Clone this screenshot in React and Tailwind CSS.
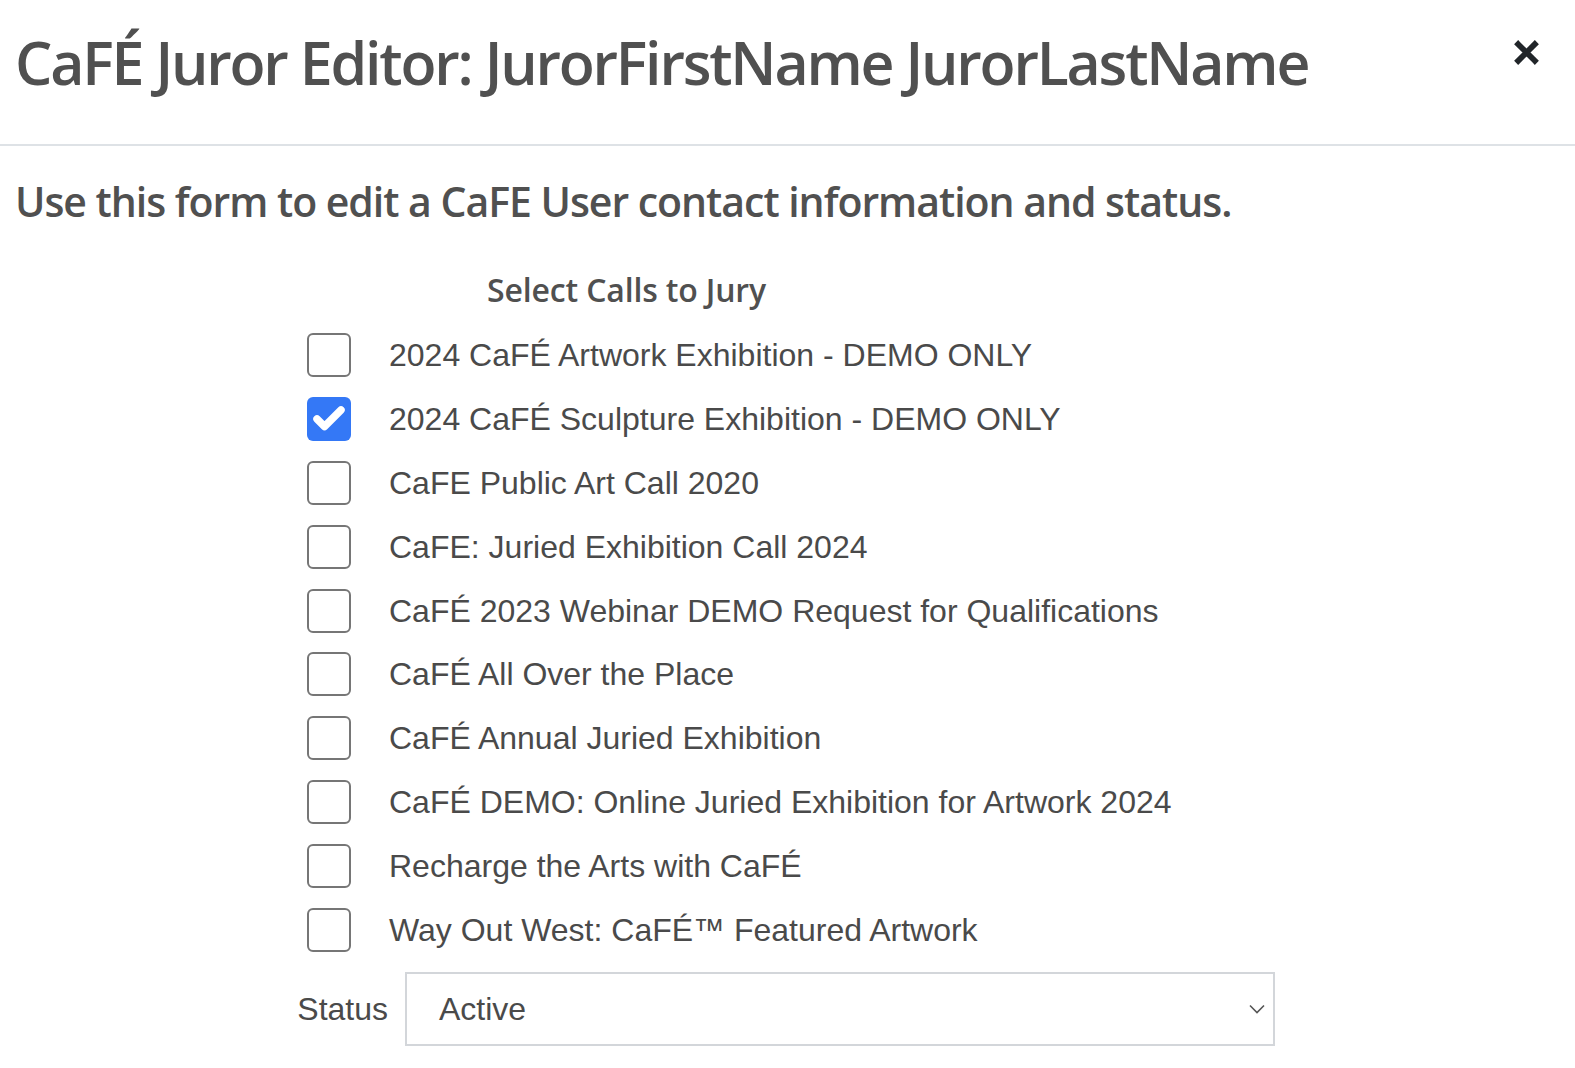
import { Check } from 'lucide-react';

const calls = [
  { id: 1, name: '2024 CaFÉ Artwork Exhibition - DEMO ONLY', checked: false },
  { id: 2, name: '2024 CaFÉ Sculpture Exhibition - DEMO ONLY', checked: true },
  { id: 3, name: 'CaFE Public Art Call 2020', checked: false },
  { id: 4, name: 'CaFE: Juried Exhibition Call 2024', checked: false },
  { id: 5, name: 'CaFÉ 2023 Webinar DEMO Request for Qualifications', checked: false },
  { id: 6, name: 'CaFÉ All Over the Place', checked: false },
  { id: 7, name: 'CaFÉ Annual Juried Exhibition', checked: false },
  { id: 8, name: 'CaFÉ DEMO: Online Juried Exhibition for Artwork 2024', checked: false },
  { id: 9, name: 'Recharge the Arts with CaFÉ', checked: false },
  { id: 10, name: 'Way Out West: CaFÉ™ Featured Artwork', checked: false },
];

const heading = { fontFamily: '"Open Sans", "Noto Sans", sans-serif' };
const body = { fontFamily: '"Liberation Sans", Arial, sans-serif' };

function Box({ checked }) {
  if (checked) {
    return (
      <span className="w-[44px] h-[44px] rounded-[6px] bg-[#3478f6] flex items-center justify-center shrink-0">
        <Check className="w-[36px] h-[36px] text-white" strokeWidth={5} />
      </span>
    );
  }
  return <span className="w-[44px] h-[44px] rounded-[6px] border-2 border-[#767676] bg-white shrink-0" />;
}

export default function App() {
  return (
    <div className="w-[1575px] h-[1068px] bg-white overflow-hidden">
      {/* Header */}
      <div className="h-[146px] border-b-2 border-[#dee2e6]">
        <div className="h-[124px] flex items-center justify-between pl-[15px] pr-[36px]">
          <h1 style={heading} className="text-[59px] font-semibold leading-none text-[#505050] tracking-[-0.037em]">
            CaFÉ Juror Editor: JurorFirstName JurorLastName
          </h1>
          <button className="w-[26px] h-[26px] flex items-center justify-center -mt-[20px]">
            <svg viewBox="0 0 24 24" className="w-[25px] h-[25px]">
              <path d="M4 4 L20 20 M20 4 L4 20" stroke="#212529" strokeWidth="5.5" strokeLinecap="square" />
            </svg>
          </button>
        </div>
      </div>

      {/* Body */}
      <div className="h-[110px] flex items-center pl-[15px]">
        <p style={heading} className="text-[41px] font-semibold leading-none text-[#505050] tracking-[-0.025em]">
          Use this form to edit a CaFE User contact information and status.
        </p>
      </div>

      <div className="h-[67px] flex items-center pl-[487px]">
        <span style={heading} className="text-[32px] font-semibold leading-none text-[#505050] tracking-[-0.005em]">
          Select Calls to Jury
        </span>
      </div>

      <div className="pl-[307px]">
        {calls.map(call => (
          <label key={call.id} className="h-[63.9px] flex items-center gap-[38px]">
            <Box checked={call.checked} />
            <span style={body} className="text-[32px] leading-none text-[#4a4a4a]">{call.name}</span>
          </label>
        ))}
      </div>

      <div className="mt-[10px] flex items-center">
        <span style={body} className="w-[388px] text-right text-[32px] leading-none text-[#4a4a4a]">Status</span>
        <div className="ml-[17px] w-[870px] h-[74px] border-2 border-[#d3d6da] flex items-center justify-between pl-[32px] pr-[8px]">
          <span style={body} className="text-[32px] leading-none text-[#4a4a4a]">Active</span>
          <svg viewBox="0 0 16 10" className="w-[16px] h-[10px]">
            <path d="M1 1.5 L8 8.5 L15 1.5" fill="none" stroke="#555" strokeWidth="1.6" />
          </svg>
        </div>
      </div>
    </div>
  );
}
